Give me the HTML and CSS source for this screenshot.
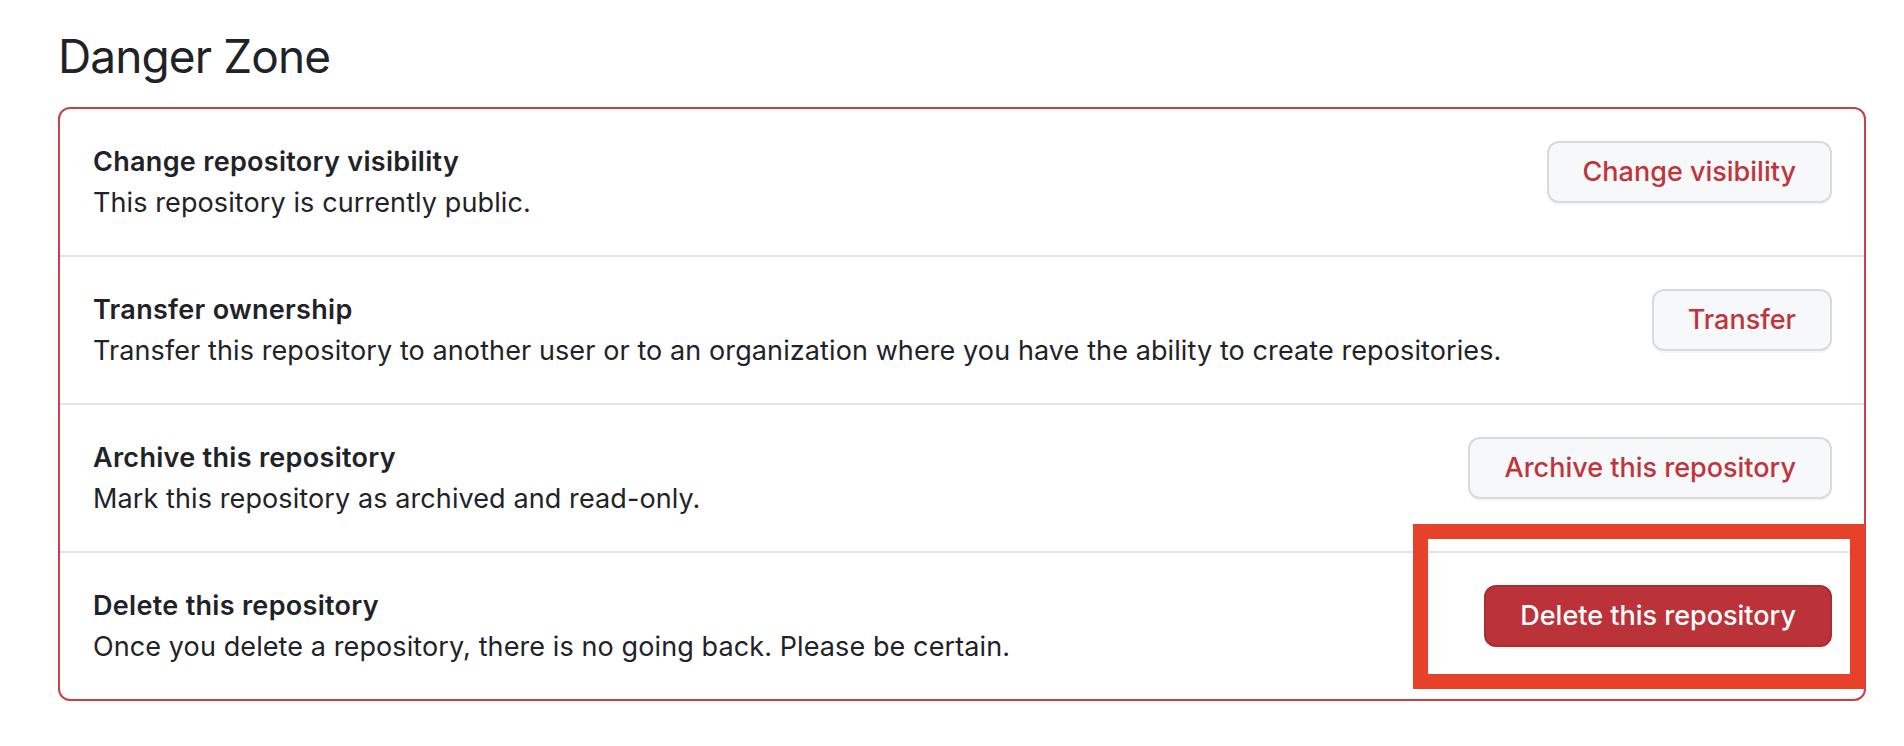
FILE: index.html
```html
<!DOCTYPE html>
<html lang="en">
<head>
<meta charset="utf-8">
<title>Danger Zone</title>
<link rel="stylesheet" href="styles.css">
</head>
<body>
<main class="page">
  <h2 class="heading">Danger Zone</h2>
  <section class="box">
    <div class="row">
      <div class="info">
        <div class="title">Change repository visibility</div>
        <div class="desc">This repository is currently public.</div>
      </div>
      <button class="btn">Change visibility</button>
    </div>
    <div class="row">
      <div class="info">
        <div class="title">Transfer ownership</div>
        <div class="desc">Transfer this repository to another user or to an organization where you have the ability to create repositories.</div>
      </div>
      <button class="btn">Transfer</button>
    </div>
    <div class="row">
      <div class="info">
        <div class="title">Archive this repository</div>
        <div class="desc">Mark this repository as archived and read-only.</div>
      </div>
      <button class="btn">Archive this repository</button>
    </div>
    <div class="row">
      <div class="info">
        <div class="title">Delete this repository</div>
        <div class="desc">Once you delete a repository, there is no going back. Please be certain.</div>
      </div>
      <button class="btn btn-danger">Delete this repository</button>
    </div>
  </section>
  <div class="highlight"></div>
</main>
</body>
</html>
```
FILE: styles.css
```css
* { box-sizing: border-box; }
html, body { margin: 0; padding: 0; background: #ffffff; }
body {
  font-family: Inter, "Liberation Sans", sans-serif;
  color: #1f2328;
}
.page {
  position: relative;
  padding: 26px 38px 0 58px;
}
.heading {
  margin: 0 0 21px 0;
  font-size: 46px;
  line-height: 60px;
  font-weight: 400;
  letter-spacing: -0.9px;
  color: #1f2328;
}
.box {
  border: 2px solid #cb3f47;
  border-radius: 12px;
}
.row {
  display: flex;
  align-items: flex-start;
  justify-content: space-between;
  padding: 32px 32px 32px 33px;
  border-top: 2px solid #e4e5e9;
}
.row:first-child { border-top: none; }
.title {
  font-size: 27px;
  line-height: 41px;
  font-weight: 600;
  letter-spacing: 0.3px;
}
.desc {
  font-size: 27px;
  line-height: 41px;
  font-weight: 400;
  letter-spacing: 0.1px;
}
.btn {
  font-family: inherit;
  font-size: 27px;
  font-weight: 500;
  line-height: 40px;
  padding: 9px 34px;
  border: 2px solid #d9dadd;
  border-radius: 12px;
  background: #f7f8fa;
  color: #c0353b;
  white-space: nowrap;
  box-shadow: 0 2px 0 rgba(31, 35, 40, 0.04);
}
.btn-danger {
  background: #bb3338;
  border-color: #a82e35;
  color: #ffffff;
}
.highlight {
  position: absolute;
  left: 1413px;
  top: 524px;
  width: 452px;
  height: 165px;
  border: 15px solid #e8412a;
}
```
